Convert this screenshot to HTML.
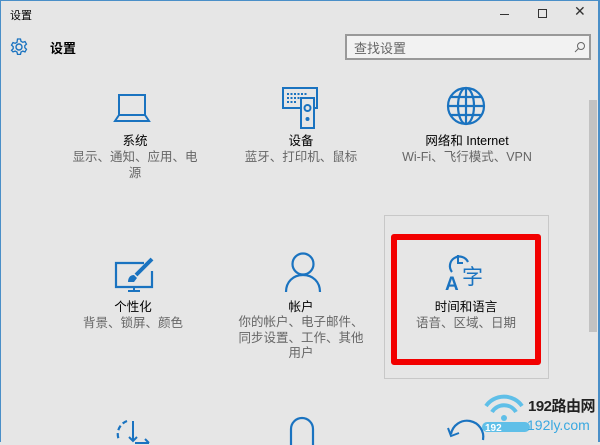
<!DOCTYPE html>
<html><head><meta charset="utf-8"><style>
*{margin:0;padding:0;box-sizing:border-box}
body{width:600px;height:442px;overflow:hidden;background:#e6e6e6;position:relative;font-family:"Liberation Sans","Noto Sans CJK SC",sans-serif;color:#000;white-space:nowrap}
.a{position:absolute}
.t{position:absolute;text-align:center;font-size:12.5px;line-height:16px;width:160px;margin-left:-80px}
.s{color:#666}
svg{position:absolute;overflow:visible}
</style></head><body>
<div class="a" style="left:0;top:0;width:1px;height:442px;background:#4a8fc8"></div>
<div class="a" style="right:0;top:0;width:2px;height:442px;background:#4a8fc8"></div>
<div class="a" style="left:0;top:0;width:600px;height:1px;background:#4a8fc8"></div>
<div class="a" style="left:10px;top:7px;font-size:11px">设置</div>
<div class="a" style="left:500px;top:14px;width:9px;height:1px;background:#333"></div>
<div class="a" style="left:538px;top:9px;width:9px;height:9px;border:1px solid #333"></div>
<div class="a" style="left:574px;top:3px;font-size:14px;color:#333">✕</div>
<svg style="left:10px;top:38px" width="18" height="18" viewBox="0 0 18 18"><circle cx="9" cy="9" r="3" fill="none" stroke="#1a73c0" stroke-width="1.4"/><path d="M7.5 1h3l.5 2.3 1.8 1 2.2-.8 1.5 2.6-1.7 1.6v2l1.7 1.6-1.5 2.6-2.2-.8-1.8 1-.5 2.3h-3l-.5-2.3-1.8-1-2.2.8L1.5 12.3l1.7-1.6v-2L1.5 7.1 3 4.5l2.2.8 1.8-1z" fill="none" stroke="#1a73c0" stroke-width="1.3"/></svg>
<div class="a" style="left:50px;top:38px;font-size:13px;font-weight:bold">设置</div>
<div class="a" style="left:345px;top:34px;width:246px;height:26px;border:2px solid #999;background:#f2f2f2"></div>
<div class="a" style="left:354px;top:38px;font-size:13px;color:#666">查找设置</div>
<svg style="left:574px;top:41px" width="12" height="12"><circle cx="7" cy="5" r="3.5" fill="none" stroke="#666"/><path d="M4.5 7.5L1 11" stroke="#666"/></svg>
<div class="a" style="left:589px;top:100px;width:8px;height:232px;background:#c2c2c2"></div>
<!-- laptop -->
<svg style="left:114px;top:93px" width="40" height="30"><rect x="5" y="2" width="26" height="20" fill="none" stroke="#1a73c0" stroke-width="2"/><path d="M5 22L1 28h34l-4-6" fill="none" stroke="#1a73c0" stroke-width="2"/></svg>
<div class="t" style="left:135px;top:133px">系统</div>
<div class="t s" style="left:135px;top:149px">显示、通知、应用、电<br>源</div>
<!-- devices -->
<svg style="left:282px;top:86px" width="40" height="44"><rect x="1" y="2" width="34" height="20" fill="none" stroke="#1a73c0" stroke-width="2"/><path d="M5 8h20M5 12h20M5 16h10" stroke="#1a73c0" stroke-width="2" stroke-dasharray="2 1.5"/><rect x="19" y="12" width="13" height="30" fill="#e6e6e6" stroke="#1a73c0" stroke-width="2"/><circle cx="25.5" cy="22" r="3" fill="none" stroke="#1a73c0" stroke-width="2"/><circle cx="25.5" cy="33" r="2" fill="#1a73c0"/></svg>
<div class="t" style="left:301px;top:133px">设备</div>
<div class="t s" style="left:301px;top:149px">蓝牙、打印机、鼠标</div>
<!-- globe -->
<svg style="left:446px;top:86px" width="40" height="40" viewBox="0 0 40 40"><g fill="none" stroke="#1a73c0" stroke-width="2.2"><circle cx="20" cy="20" r="18"/><ellipse cx="20" cy="20" rx="8" ry="18"/><path d="M20 2v36M2 20h36M5 11h30M5 29h30"/></g></svg>
<div class="t" style="left:467px;top:133px">网络和 Internet</div>
<div class="t s" style="left:467px;top:149px">Wi-Fi、飞行模式、VPN</div>
<!-- personalization -->
<svg style="left:114px;top:257px" width="42" height="36"><path d="M30 6H2v24h36V14" fill="none" stroke="#1a73c0" stroke-width="2.2"/><path d="M26 34h-12M20 30v4" stroke="#1a73c0" stroke-width="2"/><path d="M38 2L22 18" stroke="#1a73c0" stroke-width="4"/><path d="M20 18c-4 0-6 3-6 7h6l3-4z" fill="#1a73c0"/></svg>
<div class="t" style="left:133px;top:299px">个性化</div>
<div class="t s" style="left:133px;top:315px">背景、锁屏、颜色</div>
<!-- account -->
<svg style="left:283px;top:252px" width="40" height="40"><circle cx="20" cy="12" r="10.5" fill="none" stroke="#1a73c0" stroke-width="2.2"/><path d="M3 40c0-10 7-17 17-17s17 7 17 17" fill="none" stroke="#1a73c0" stroke-width="2.2"/></svg>
<div class="t" style="left:301px;top:299px">帐户</div>
<div class="t s" style="left:301px;top:315px;line-height:15.5px">你的帐户、电子邮件、<br>同步设置、工作、其他<br>用户</div>
<!-- time & lang -->
<div class="a" style="left:384px;top:215px;width:165px;height:164px;border:1px solid #c8c8c8"></div>
<div class="a" style="left:391px;top:234px;width:150px;height:131px;border:6px solid #f20000;border-radius:3px"></div>
<svg style="left:444px;top:250px" width="44" height="42"><path d="M8 22A9.5 9.5 0 1 1 24 12" fill="none" stroke="#1a73c0" stroke-width="2.2"/><path d="M14 5v8h5" fill="none" stroke="#1a73c0" stroke-width="2"/><text x="1" y="40" font-family="Liberation Sans" font-weight="bold" font-size="19" fill="#1a73c0">A</text><text x="18" y="34" font-family="Noto Sans CJK SC" font-size="21" fill="#1a73c0">字</text></svg>
<div class="t" style="left:466px;top:299px">时间和语言</div>
<div class="t s" style="left:466px;top:315px">语音、区域、日期</div>
<!-- bottom row icons partial -->
<svg style="left:113px;top:415px" width="40" height="30"><path d="M14 6A14 14 0 0 0 6 25" fill="none" stroke="#1a73c0" stroke-width="2.2" stroke-dasharray="5 3"/><path d="M20 6v20M16 22l4 4 4-4M22 28h14M32 24l4 4" fill="none" stroke="#1a73c0" stroke-width="2"/></svg>
<svg style="left:286px;top:415px" width="32" height="30"><path d="M5 30V14a11 11 0 0 1 22 0v16" fill="none" stroke="#1a73c0" stroke-width="2.2"/></svg>
<svg style="left:443px;top:414px" width="44" height="30"><path d="M8 20A16 16 0 0 1 40 26" fill="none" stroke="#1a73c0" stroke-width="2.2"/><path d="M5 14l3 8 8-3" fill="none" stroke="#1a73c0" stroke-width="2"/></svg>
<!-- watermark -->
<svg style="left:482px;top:392px" width="50" height="40"><path d="M4 14a22 22 0 0 1 36 0M10 20a14 14 0 0 1 24 0" fill="none" stroke="#5fbfe8" stroke-width="4"/><circle cx="22" cy="26" r="3" fill="#5fbfe8"/><rect x="0" y="30" width="48" height="10" rx="5" fill="#5fbfe8"/><text x="3" y="39" font-size="10" font-weight="bold" fill="#fff" font-family="Liberation Sans">192</text></svg>
<div class="a" style="left:528px;top:398px;font-size:15px;line-height:18px;font-weight:bold;color:#222;letter-spacing:-0.5px">192路由网</div>
<div class="a" style="left:527px;top:417px;font-size:14px;line-height:16px;color:#3aa8e0">192ly.com</div>
</body></html>
